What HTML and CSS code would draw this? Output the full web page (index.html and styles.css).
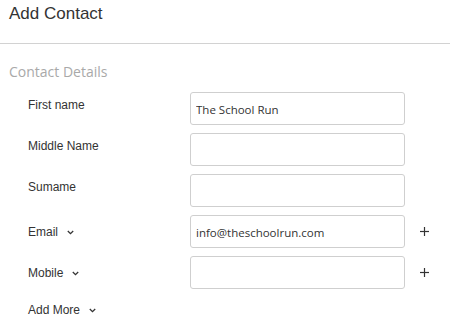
FILE: index.html
```html
<!DOCTYPE html>
<html>
<head>
<meta charset="utf-8">
<link rel="stylesheet" href="styles.css">
</head>
<body>
<div class="header"><span class="title">Add Contact</span></div>
<div class="section-title">Contact Details</div>
<div class="form">
  <div class="row">
    <div class="label">First name</div>
    <input class="field" type="text" value="The School Run">
  </div>
  <div class="row">
    <div class="label">Middle Name</div>
    <input class="field" type="text" value="">
  </div>
  <div class="row">
    <div class="label">Sumame</div>
    <input class="field" type="text" value="">
  </div>
  <div class="row">
    <div class="label drop">Email<svg class="chev" width="7" height="5" viewBox="0 0 7 5"><polyline points="0.8,1 3.5,3.6 6.2,1" /></svg></div>
    <input class="field" type="text" value="info@theschoolrun.com">
    <svg class="plus" width="9" height="9" viewBox="0 0 9 9"><line x1="4.5" y1="0" x2="4.5" y2="9"/><line x1="0" y1="4.5" x2="9" y2="4.5"/></svg>
  </div>
  <div class="row">
    <div class="label drop">Mobile<svg class="chev" width="7" height="5" viewBox="0 0 7 5"><polyline points="0.8,1 3.5,3.6 6.2,1" /></svg></div>
    <input class="field" type="text" value="">
    <svg class="plus" width="9" height="9" viewBox="0 0 9 9"><line x1="4.5" y1="0" x2="4.5" y2="9"/><line x1="0" y1="4.5" x2="9" y2="4.5"/></svg>
  </div>
  <div class="row more">
    <div class="label">Add More<svg class="chev" width="7" height="5" viewBox="0 0 7 5"><polyline points="0.8,1 3.5,3.6 6.2,1" /></svg></div>
  </div>
</div>
</body>
</html>
```
FILE: styles.css
```css
html, body {
  margin: 0;
  padding: 0;
  background: #fff;
}
body {
  font-family: "Liberation Sans", Arial, sans-serif;
  color: #333;
  width: 450px;
  height: 328px;
  overflow: hidden;
}
.header {
  box-sizing: border-box;
  height: 44px;
  border-bottom: 1px solid #d2d2d2;
  padding: 4px 0 0 9px;
}
.title {
  font-size: 17px;
  line-height: 20px;
  color: #333;
}
.section-title {
  font-family: "Open Sans", sans-serif;
  font-size: 14px;
  line-height: 20px;
  color: #a9a9a9;
  margin: 18px 0 10px 9px;
}
.form {
  padding-left: 28px;
}
.row {
  display: flex;
  align-items: flex-start;
  height: 32px;
  margin-bottom: 9px;
}
.label {
  width: 162px;
  flex: none;
  font-size: 12px;
  line-height: 14px;
  padding-top: 6px;
  color: #333;
}
.label.drop {
  padding-top: 10px;
}
.chev {
  display: inline-block;
  margin-left: 9px;
  vertical-align: 1px;
  fill: none;
  stroke: #333;
  stroke-width: 1.3;
}
.field {
  box-sizing: border-box;
  width: 215px;
  height: 33px;
  margin: 0;
  border: 1px solid #cfcfcf;
  border-radius: 3px;
  padding: 2px 0 0 5px;
  font-family: "Open Sans", sans-serif;
  font-size: 11.5px;
  color: #333;
  background: #fff;
  outline: none;
}
.plus {
  flex: none;
  margin: 12px 0 0 15px;
  stroke: #333;
  stroke-width: 1.2;
}
```
